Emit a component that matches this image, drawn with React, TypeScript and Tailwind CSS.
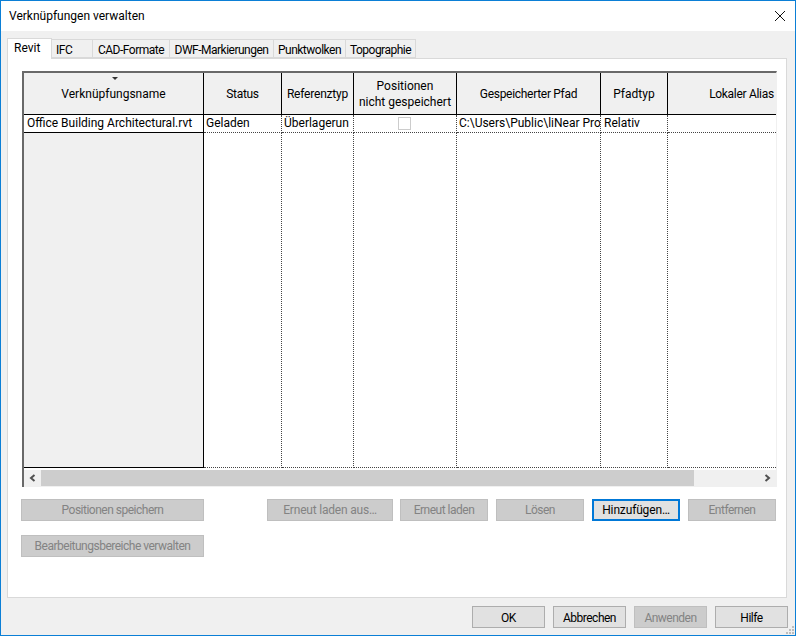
import type { ReactNode } from 'react';

type Column = {
  label: ReactNode;
  cell?: ReactNode;
  width: string;
  last?: boolean;
};

const tabs = [
  { label: 'IFC', width: 'w-[41px]', align: 'pl-[4px]' },
  { label: 'CAD-Formate', width: 'w-[77px]', align: 'justify-center' },
  { label: 'DWF-Markierungen', width: 'w-[104px]', align: 'justify-center' },
  { label: 'Punktwolken', width: 'w-[72px]', align: 'justify-center' },
  { label: 'Topographie', width: 'w-[70px]', align: 'justify-center' },
];

const columns: Column[] = [
  { label: <span className="tracking-[-0.3px]">Status</span>, cell: 'Geladen', width: 'w-[78px]' },
  { label: <span className="tracking-[-0.2px]">Referenztyp</span>, cell: 'Überlagerun', width: 'w-[72px]' },
  {
    label: (
      <>
        Positionen
        <br />
        nicht gespeichert
      </>
    ),
    cell: <div className="ml-[42px] h-[13px] w-[13px] border border-[#cccccc] bg-white" />,
    width: 'w-[103px]',
  },
  { label: <span className="tracking-[-0.3px]">Gespeicherter Pfad</span>, cell: 'C:\\Users\\Public\\liNear Pro', width: 'w-[144px]' },
  { label: 'Pfadtyp', cell: <span className="pl-px">Relativ</span>, width: 'w-[67px]' },
  {
    label: <span className="block pl-[39px] tracking-[-0.3px] whitespace-nowrap">Lokaler Alias</span>,
    width: 'w-[108px]',
    last: true,
  },
];

function DialogButton({
  children,
  width,
  disabled,
  focused,
}: {
  children: ReactNode;
  width: string;
  disabled?: boolean;
  focused?: boolean;
}) {
  let look = 'border border-[#adadad] bg-[#e1e1e1] text-black';
  if (disabled) look = 'border border-[#bfbfbf] bg-[#cccccc] text-[#838383]';
  if (focused) look = 'border-2 border-[#0078d7] bg-[#e1e1e1] text-black';
  return (
    <div className={`flex h-[22px] shrink-0 items-center justify-center tracking-[-0.5px] whitespace-nowrap ${width} ${look}`}>
      {children}
    </div>
  );
}

function TableColumn({ column }: { column: Column }) {
  return (
    <div className={`flex shrink-0 flex-col ${column.width}`}>
      <div
        className={`flex h-[42px] items-center justify-center border-b border-black bg-[#f0f0f0] text-center leading-[16px] ${
          column.last ? '' : 'border-r'
        }`}
      >
        <div className="w-full">{column.label}</div>
      </div>
      <div
        className={`flex h-[18px] items-center overflow-hidden border-b border-dotted border-b-[#444444] pb-px pl-[2px] whitespace-nowrap ${
          column.last ? '' : 'border-r border-r-[#444444]'
        }`}
      >
        {column.cell}
      </div>
      <div
        className={`h-[335px] border-b border-dotted border-b-[#444444] ${
          column.last ? '' : 'border-r border-r-[#444444]'
        }`}
      />
    </div>
  );
}

export default function App() {
  return (
    <div
      className="flex h-[636px] w-[796px] flex-col overflow-hidden border border-[#0b7fd6] bg-[#f0f0f0] text-[12px] text-black"
      style={{ fontFamily: 'Roboto, sans-serif' }}
    >
      {/* title bar */}
      <div className="flex h-[30px] shrink-0 items-center justify-between bg-white pr-[9px] pl-[8px]">
        <span className="text-[12px]">Verknüpfungen verwalten</span>
        <svg width="12" height="12" viewBox="0 0 12 12" fill="none" stroke="#111" strokeWidth="1">
          <path d="M1 1l10 10M11 1L1 11" />
        </svg>
      </div>

      {/* tabs */}
      <div className="mt-[6px] flex h-[21px] shrink-0 items-end pl-[6px]">
        <div className="z-10 -mb-px flex h-[21px] w-[45px] items-center border border-b-0 border-[#d9d9d9] bg-white pb-[2px] pl-[6px]">
          Revit
        </div>
        {tabs.map((tab) => (
          <div
            key={tab.label}
            className={`flex h-[19px] items-center border-t border-r border-b border-[#d9d9d9] pt-[2px] tracking-[-0.5px] whitespace-nowrap ${tab.width} ${tab.align}`}
          >
            {tab.label}
          </div>
        ))}
      </div>

      {/* panel */}
      <div className="mx-[6px] h-[540px] w-[780px] shrink-0 border border-[#d9d9d9] bg-white pt-[12px] pl-[14px]">
        <div className="w-[755px] border-t-2 border-r border-l-2 border-[#696969] border-r-[#f0f0f0]">
          <div className="flex">
            <div className="flex w-[180px] shrink-0 flex-col">
              <div className="relative flex h-[42px] items-center justify-center border-r border-b border-black bg-[#f0f0f0]">
                <svg className="absolute top-[4px] left-[88px]" width="6" height="3" viewBox="0 0 6 3">
                  <path d="M0 0h6L3 3z" fill="#333" />
                </svg>
                Verknüpfungsname
              </div>
              <div className="flex h-[18px] items-center border-r border-b border-black pb-px pl-[3px] whitespace-nowrap">
                Office Building Architectural.rvt
              </div>
              <div className="h-[335px] border-r border-b border-black bg-[#f0f0f0]" />
            </div>
            {columns.map((column, i) => (
              <TableColumn key={i} column={column} />
            ))}
          </div>

          {/* horizontal scrollbar */}
          <div className="mt-[2px] flex h-[17px] border-b border-[#f0f0f0]">
            <div className="flex w-[17px] shrink-0 items-center justify-center bg-[#f0f0f0]">
              <svg width="7" height="8" viewBox="0 0 7 8" fill="none" stroke="#505050" strokeWidth="2">
                <path d="M5.5 1L2 4l3.5 3" />
              </svg>
            </div>
            <div className="w-[653px] shrink-0 bg-[#cdcdcd]" />
            <div className="flex flex-1 items-center justify-end bg-[#f0f0f0] pr-[5px]">
              <svg width="7" height="8" viewBox="0 0 7 8" fill="none" stroke="#505050" strokeWidth="2">
                <path d="M1.5 1L5 4 1.5 7" />
              </svg>
            </div>
          </div>
        </div>

        {/* action buttons */}
        <div className="mt-[12px] -ml-px flex">
          <DialogButton width="w-[183px]" disabled>
            Positionen speichern
          </DialogButton>
          <div className="ml-[63px]">
            <DialogButton width="w-[126px]" disabled>
              <span className="tracking-[-0.2px]">Erneut laden aus…</span>
            </DialogButton>
          </div>
          <div className="ml-[7px] flex gap-[8px]">
            <DialogButton width="w-[88px]" disabled>
              Erneut laden
            </DialogButton>
            <DialogButton width="w-[88px]" disabled>
              Lösen
            </DialogButton>
            <DialogButton width="w-[88px]" focused>
              <span className="tracking-[-0.15px]">Hinzufügen…</span>
            </DialogButton>
            <DialogButton width="w-[88px]" disabled>
              Entfernen
            </DialogButton>
          </div>
        </div>
        <div className="mt-[14px] -ml-px">
          <DialogButton width="w-[183px]" disabled>
            Bearbeitungsbereiche verwalten
          </DialogButton>
        </div>
      </div>

      {/* footer */}
      <div className="relative flex flex-1 items-start pt-[8px] pl-[471px]">
        <div className="flex gap-[8px]">
          <DialogButton width="w-[73px]">
            <span className="pt-px">OK</span>
          </DialogButton>
          <DialogButton width="w-[73px]">
            <span className="pt-px">Abbrechen</span>
          </DialogButton>
          <DialogButton width="w-[73px]" disabled>
            <span className="pt-px">Anwenden</span>
          </DialogButton>
          <DialogButton width="w-[73px]">
            <span className="pt-px">Hilfe</span>
          </DialogButton>
        </div>
        <svg className="absolute right-0 bottom-0" width="9" height="9" viewBox="0 0 9 9" fill="#bdbdbd">
          <path d="M6 0h2v2H6zM3 3h2v2H3zM6 3h2v2H6zM0 6h2v2H0zM3 6h2v2H3zM6 6h2v2H6z" />
        </svg>
      </div>
    </div>
  );
}
